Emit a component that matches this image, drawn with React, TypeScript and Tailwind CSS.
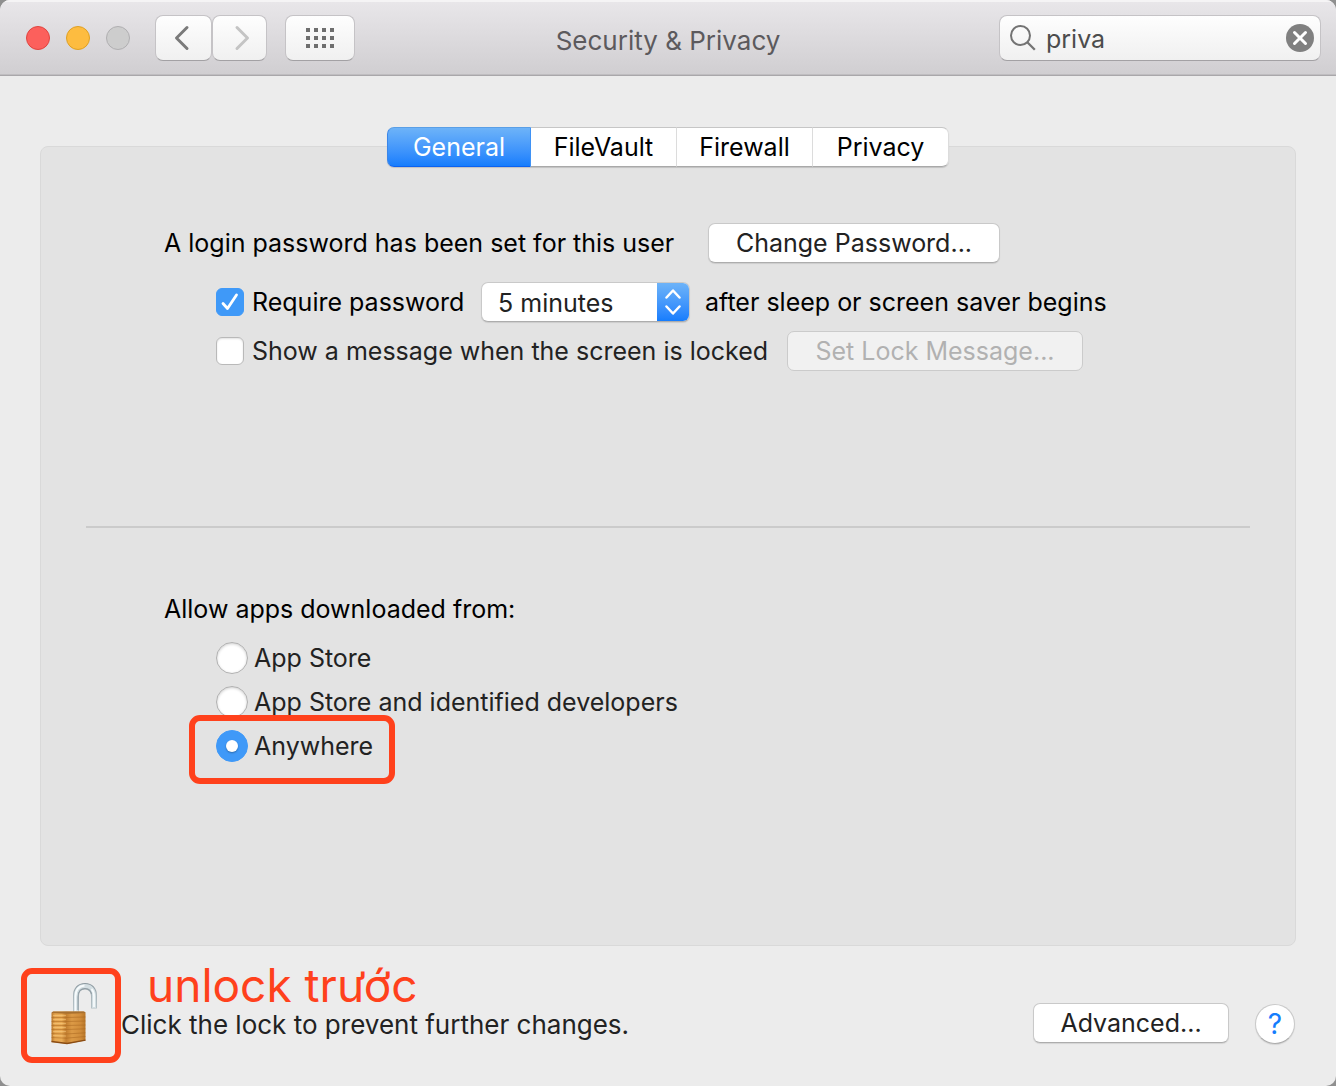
import React, { useState } from "react";

const buttonBase =
  "h-10 rounded-[7px] border border-[#c9c9c9] border-b-[#adadad] bg-white px-6 leading-[30px] text-[#222] shadow-[0_1px_1px_rgba(0,0,0,0.1)]";

const toolButton =
  "flex h-[46px] items-center justify-center rounded-[8px] border border-[#c5c3c6] border-b-[#a3a1a4] bg-linear-to-b from-[#fefefe] to-[#f0f0f0]";

function TrafficLights() {
  return (
    <div className="flex gap-4">
      <button aria-label="Close" className="size-6 rounded-full border border-[#e0443f] bg-[#fc605c]" />
      <button aria-label="Minimize" className="size-6 rounded-full border border-[#dfa023] bg-[#fdbc40]" />
      <button aria-label="Zoom" disabled className="size-6 rounded-full border border-[#b0afb1] bg-[#cdcdcd]" />
    </div>
  );
}

function Toolbar() {
  return (
    <header className="grid h-[76px] grid-cols-[1fr_auto_1fr] items-center border-b border-[#a9a7aa] bg-linear-to-b from-[#e9e7ea] to-[#d0ced1] px-[15px] shadow-[inset_0_2px_0_#f5f4f5,inset_0_-1px_0_#bfbdc0]">
      <div className="flex items-center pl-[11px]">
        <TrafficLights />
        <div className="ml-[25px] flex">
          <button aria-label="Back" className={`${toolButton} w-[57px]`}>
            <svg width="16" height="26" viewBox="0 0 16 26" fill="none" stroke="#7a7a7a" strokeWidth="3" strokeLinecap="round" strokeLinejoin="round" className="mr-1">
              <path d="M13 2.5 2.5 13 13 23.5" />
            </svg>
          </button>
          <button aria-label="Forward" className={`${toolButton} w-[55px]`}>
            <svg width="16" height="26" viewBox="0 0 16 26" fill="none" stroke="#c4c4c4" strokeWidth="3" strokeLinecap="round" strokeLinejoin="round" className="ml-1">
              <path d="M3 2.5 13.5 13 3 23.5" />
            </svg>
          </button>
        </div>
        <button aria-label="Show All" className={`${toolButton} ml-[18px] w-[70px]`}>
          <svg width="28" height="20" viewBox="0 0 28 20" fill="#6e6e6e">
            {[0, 8, 16].map((y) =>
              [0, 8, 16, 24].map((x) => <rect key={`${x}-${y}`} x={x} y={y} width="4" height="4" />)
            )}
          </svg>
        </button>
      </div>
      <h1 className="mt-[6px] text-[26px] leading-[30px] text-[#5c5a5d]">Security &amp; Privacy</h1>
      <div className="flex h-[46px] w-[322px] items-center justify-self-end rounded-[8px] border border-[#c5c3c6] border-b-[#a3a1a4] bg-linear-to-b from-[#fefefe] to-[#f0f0f0] pr-[6px] pl-[10px]">
        <svg width="26" height="26" viewBox="0 0 26 26" fill="none" stroke="#737373" strokeWidth="2" className="shrink-0">
          <circle cx="10.5" cy="10.5" r="9.5" />
          <path d="m17.3 17.3 7.5 7.5" strokeWidth="2.3" />
        </svg>
        <input aria-label="Search" defaultValue="priva" className="ml-[10px] h-8 min-w-0 flex-1 bg-transparent pt-[2px] text-[#4c4c4c] outline-none" />
        <button aria-label="Clear search" className="shrink-0">
          <svg width="28" height="28" viewBox="0 0 28 28">
            <circle cx="14" cy="14" r="14" fill="#808080" />
            <path d="m8.5 8.5 11 11m0-11-11 11" stroke="#fff" strokeWidth="3" strokeLinecap="round" />
          </svg>
        </button>
      </div>
    </header>
  );
}

function Tabs() {
  const [active, setActive] = useState("General");
  const tabs = [
    { name: "General", width: "w-36" },
    { name: "FileVault", width: "w-[146px]" },
    { name: "Firewall", width: "w-[136px]" },
    { name: "Privacy", width: "w-[136px]" },
  ];
  return (
    <div role="tablist" className="-mt-5 flex h-10 self-center rounded-[7px] shadow-[0_1px_1px_rgba(0,0,0,0.15)]">
      {tabs.map(({ name, width }) => (
        <button
          key={name}
          role="tab"
          aria-selected={name === active}
          onClick={() => setActive(name)}
          className={`${width} border-y border-r leading-[30px] first:rounded-l-[7px] first:border-l last:rounded-r-[7px] ${
            name === active
              ? "border-t-[#5a9fe6] border-r-[#3f92f5] border-b-[#0d62f0] border-l-[#3b86e8] bg-linear-to-b from-[#6db3f8] to-[#157dfd] text-white"
              : "border-t-[#c6c6c6] border-r-[#dcdcdc] border-b-[#a9a9a9] bg-white text-black"
          }`}
        >
          {name}
        </button>
      ))}
    </div>
  );
}

function Checkbox({ label, checked, className }: { label: string; checked?: boolean; className: string }) {
  return (
    <label className={`flex items-center gap-2 ${className}`}>
      <span className="grid size-7 shrink-0 place-items-center">
        <input
          type="checkbox"
          defaultChecked={checked}
          className="peer col-start-1 row-start-1 size-7 appearance-none rounded-[6px] border border-[#b9b9b9] bg-white shadow-[inset_0_1px_2px_rgba(0,0,0,0.12)] checked:border-[#3f99f8] checked:bg-[#3f99f8] checked:shadow-none"
        />
        <svg width="18" height="18" viewBox="0 0 18 18" fill="none" stroke="#fff" strokeWidth="2.8" strokeLinecap="round" strokeLinejoin="round" className="pointer-events-none col-start-1 row-start-1 hidden peer-checked:block">
          <path d="m2 10.5 4.5 5L15.500 2" />
        </svg>
      </span>
      {label}
    </label>
  );
}

function Radio({ label, checked, marked }: { label: string; checked?: boolean; marked?: boolean }) {
  return (
    <div className="relative flex h-11 items-center self-start">
      <label className="flex items-center gap-[6px] text-[#222]">
        <span className="grid size-8 shrink-0 place-items-center">
          <input
            type="radio"
            name="source"
            defaultChecked={checked}
            className="peer col-start-1 row-start-1 size-8 appearance-none rounded-full border border-[#b0b0b0] bg-white shadow-[inset_0_1px_3px_rgba(0,0,0,0.2)] checked:border-[#3f99f8] checked:bg-[#3f99f8] checked:shadow-none"
          />
          <span className="pointer-events-none col-start-1 row-start-1 hidden size-3 rounded-full bg-white shadow-[0_1px_2px_rgba(0,0,0,0.3)] peer-checked:block" />
        </span>
        {label}
      </label>
      {marked && (
        <span className="pointer-events-none absolute -top-[9px] -right-[22px] -bottom-4 -left-[27px] rounded-[11px] border-6 border-[#ff411c]" />
      )}
    </div>
  );
}

function PasswordSettings() {
  return (
    <section className="mt-14 flex flex-col pl-[123px]">
      <div className="flex h-10 items-center">
        <span className="w-[544px] whitespace-nowrap">A login password has been set for this user</span>
        <button className={`${buttonBase} w-[292px] whitespace-nowrap`}>Change Password...</button>
      </div>
      <div className="mt-[19px] flex h-10 items-center pl-[52px]">
        <Checkbox label="Require password" checked className="w-[265px] whitespace-nowrap" />
        <div className="grid h-10 w-[209px] overflow-hidden rounded-[7px] border border-[#c9c9c9] border-b-[#adadad] bg-white shadow-[0_1px_1px_rgba(0,0,0,0.1)]">
          <select aria-label="Require password after" className="col-start-1 row-start-1 h-full w-full appearance-none pt-[2px] pr-10 pl-4 text-[#222]">
            <option>5 minutes</option>
            <option>15 minutes</option>
            <option>1 hour</option>
          </select>
          <span className="pointer-events-none col-start-1 row-start-1 flex w-8 items-center justify-center justify-self-end bg-linear-to-b from-[#6db3f8] to-[#157dfd]">
            <svg width="16" height="26" viewBox="0 0 16 26" fill="none" stroke="#fff" strokeWidth="2.5" strokeLinecap="round" strokeLinejoin="round">
              <path d="m1.500 8.500 6.500-7 6.500 7M1.500 17.500l6.500 7 6.500-7" />
            </svg>
          </span>
        </div>
        <span className="ml-[15px] whitespace-nowrap">after sleep or screen saver begins</span>
      </div>
      <div className="mt-[9px] flex h-10 items-center pl-[52px] text-[#222]">
        <Checkbox label="Show a message when the screen is locked" className="w-[571px] whitespace-nowrap" />
        <button disabled className="h-10 w-[296px] rounded-[7px] border border-[#cbcbcb] bg-[#f1f1f1] leading-[30px] whitespace-nowrap text-[#b1b1b1]">
          Set Lock Message...
        </button>
      </div>
    </section>
  );
}

function LockIcon() {
  return (
    <svg width="48" height="64" viewBox="0 0 48 64">
      <defs>
        <linearGradient id="brass" x1="0" x2="1">
          <stop offset="0" stopColor="#b8762c" />
          <stop offset=".1" stopColor="#e6a650" />
          <stop offset=".3" stopColor="#e9ab55" />
          <stop offset=".43" stopColor="#c37f30" />
          <stop offset=".6" stopColor="#dc9a46" />
          <stop offset=".85" stopColor="#d08c3a" />
          <stop offset="1" stopColor="#b87628" />
        </linearGradient>
        <linearGradient id="steel" x1="0" x2="0" y1="0" y2="1">
          <stop offset="0" stopColor="#8b989f" />
          <stop offset=".35" stopColor="#a9b5ba" />
          <stop offset="1" stopColor="#b9c5ca" />
        </linearGradient>
      </defs>
      <path d="M26 30V14C26 7.500 29.500 4 35 4s9 3.500 9 10v12.500" fill="none" stroke="url(#steel)" strokeWidth="6" />
      <path d="M26 30V14C26 7.500 29.500 4 35 4s9 3.500 9 10v12" fill="none" stroke="#d3dee2" strokeWidth="4" />
      <path d="M25.500 29V14.500C25.500 8 29 4 34.500 3.500M44 25V14c0-3-1-5.500-2.500-7" fill="none" stroke="#f7fbfc" strokeWidth="1.800" />
      <path d="M28 28V15c0-5 2.500-8 7-8 3.500 0 5.500 2 6.500 5" fill="none" stroke="#8c9aa1" strokeWidth="1.200" opacity=".8" />
      <path d="M1.500 31q.5-1.500 2-1.500h30q2 0 2 1.500v27.500L17 62 1.500 60Z" fill="url(#brass)" />
      <path d="M1.500 31q.5-1.500 2-1.500h30q2 0 2 1.500-17 1.500-34 0Z" fill="#a8702f" />
      <path d="M1.500 35.500H16l19.500-.5M1.500 39.500H16l19.500-.5M1.500 43.500H16l19.500-.5M1.500 47.500H16l19.500-.7M1.500 51.500l14.500.5 19.500-1.200M1.500 55.500l14.500.7 19.500-1.700" fill="none" stroke="#a6631e" strokeWidth="1" opacity=".5" />
      <path d="M3 33.500h13M3 37.500h13M3 41.500h13M3 45.500h13M3 49.500h13M3 53.500l13 .5" stroke="#ffd58c" strokeWidth="1" opacity=".45" />
      <path d="M1.500 59.500 17 61.500l18.500-3.300" fill="none" stroke="#8a4c14" strokeWidth="1.300" />
    </svg>
  );
}

function Footer() {
  return (
    <footer className="flex items-start pr-[41px] pl-[21px]">
      <button aria-label="Lock settings" className="mt-[22px] flex h-[95px] w-[100px] shrink-0 items-center justify-center rounded-[11px] border-6 border-[#ff411c] pb-[3px] pl-[6px]">
        <LockIcon />
      </button>
      <div className="mt-[15px] flex flex-col whitespace-nowrap">
        <span className="ml-[26px] text-[46px] leading-[48px] text-[#ff411c]">unlock trước</span>
        <span className="mt-px text-[26px] leading-[30px] text-[#222]">Click the lock to prevent further changes.</span>
      </div>
      <div className="mt-[57px] ml-auto flex gap-[26px]">
        <button className={`${buttonBase} w-[196px]`}>Advanced...</button>
        <button aria-label="Help" className="mt-px size-10 rounded-full border border-[#c9c9c9] border-b-[#adadad] bg-white text-[28px] leading-[30px] text-[#157dfd] shadow-[0_1px_1px_rgba(0,0,0,0.1)]">
          ?
        </button>
      </div>
    </footer>
  );
}

export default function App() {
  return (
    <div className="min-h-screen bg-[#8f8f8f] font-['Inter',sans-serif] text-[25px] leading-[30px] text-black">
      <div className="flex min-h-screen flex-col overflow-hidden rounded-[10px] bg-[#ececec]">
        <Toolbar />
        <main className="mx-10 mt-[70px] flex min-h-[800px] flex-col rounded-[8px] border border-[#d9d9d9] bg-[#e3e3e3]">
          <Tabs />
          <PasswordSettings />
          <hr className="mx-[45px] mt-[155px] border-t-2 border-[#cbcbcb]" />
          <section className="mt-[66px] flex flex-col pl-[123px]">
            <h2>Allow apps downloaded from:</h2>
            <div role="radiogroup" aria-label="Allow apps downloaded from" className="mt-3 flex flex-col pl-[52px]">
              <Radio label="App Store" />
              <Radio label="App Store and identified developers" />
              <Radio label="Anywhere" checked marked />
            </div>
          </section>
        </main>
        <Footer />
      </div>
    </div>
  );
}
